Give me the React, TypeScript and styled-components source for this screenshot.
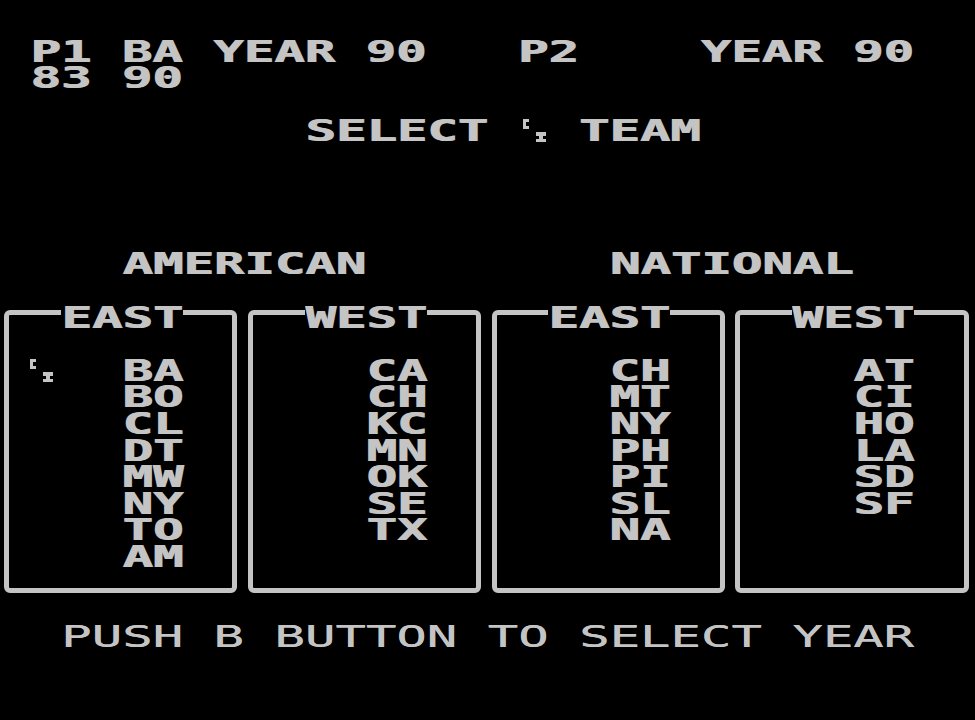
import React from "react";
import styled, { createGlobalStyle } from "styled-components";

const COL = 975 / 32;
const ROW = 26.6;
const FONT = 31;
const SCALE = COL / (FONT * 0.6021);
const INK = "#c4c4c4";

const Global = createGlobalStyle`
  html, body { margin: 0; padding: 0; background: #000; }
  #root { width: 975px; height: 720px; }
`;

const Screen = styled.div`
  width: 975px;
  height: 720px;
  box-sizing: border-box;
  overflow: hidden;
  background: #000;
  color: ${INK};
  font-family: "DejaVu Sans Mono", "Liberation Mono", monospace;
  font-size: ${FONT}px;
  font-weight: bold;
  padding-top: 37.6px;
  display: flex;
  flex-direction: column;
`;

const Line = styled.div<{ $col?: number; $gap?: number }>`
  display: flex;
  align-items: flex-start;
  height: ${ROW}px;
  line-height: ${ROW}px;
  padding-left: ${(p) => (p.$col ?? 0) * COL}px;
  margin-top: ${(p) => (p.$gap ?? 0) * ROW}px;
`;

const Cell = styled.span<{ $cols: number }>`
  display: inline-block;
  flex: none;
  width: ${(p) => p.$cols * COL}px;
  height: ${ROW}px;
  white-space: pre;
`;

const Glyphs = styled.span<{ $thin?: boolean }>`
  display: inline-block;
  white-space: pre;
  transform: scaleX(${SCALE});
  transform-origin: 0 0;
  font-weight: ${(p) => (p.$thin ? "normal" : "bold")};
  text-shadow: ${(p) => (p.$thin ? "0.3px 0 0 currentColor" : "0.9px 0 0 currentColor")};
`;

function Tiles({ text, thin }: { text: string; thin?: boolean }) {
  return (
    <Cell $cols={text.length}>
      <Glyphs $thin={thin}>{text}</Glyphs>
    </Cell>
  );
}

const PX_W = COL / 8;
const PX_H = ROW / 8;

const CursorSvg = styled.svg<{ $dx: number; $dy: number }>`
  display: block;
  flex: none;
  width: ${7 * PX_W}px;
  height: ${7 * PX_H}px;
  margin-left: ${(p) => p.$dx}px;
  margin-top: ${(p) => p.$dy}px;
`;

function Cursor({ dx, dy }: { dx: number; dy: number }) {
  return (
    <CursorSvg $dx={dx} $dy={dy} viewBox="0 0 7 7" shapeRendering="crispEdges">
      <g fill={INK}>
        <rect x="0" y="0" width="2" height="1" />
        <rect x="0" y="1" width="1" height="1" />
        <rect x="0" y="2" width="2" height="1" />
        <rect x="4" y="4" width="3" height="1" />
        <rect x="5" y="5" width="1" height="1" />
        <rect x="4" y="6" width="3" height="1" />
      </g>
    </CursorSvg>
  );
}

const CursorCell = styled.span`
  display: flex;
  flex: none;
  width: ${COL}px;
  height: ${ROW}px;
`;

const Divisions = styled.div`
  display: flex;
  height: ${11 * ROW}px;
  margin-top: ${ROW}px;
`;

const Division = styled.div`
  flex: none;
  width: ${8 * COL}px;
  display: flex;
  flex-direction: column;
`;

const FRAME_LEFT = 4;
const BORDER = 5;
const INSET = FRAME_LEFT + BORDER;

const Frame = styled.div`
  box-sizing: border-box;
  height: 283px;
  margin: 6px 6.5px 0 ${FRAME_LEFT}px;
  border: ${BORDER}px solid ${INK};
  border-radius: 6px;
  display: flex;
  flex-direction: column;
`;

const Legend = styled.div`
  align-self: flex-start;
  display: flex;
  height: ${ROW}px;
  line-height: ${ROW}px;
  margin-top: -${6 + BORDER}px;
  margin-left: ${2 * COL - INSET}px;
  background: #000;
`;

const TeamList = styled.div`
  display: flex;
  flex-direction: column;
  margin-top: ${ROW}px;
`;

const TeamRow = styled.div`
  display: grid;
  grid-template-columns: ${4 * COL - INSET}px auto;
  height: ${ROW}px;
  line-height: ${ROW}px;
`;

const Marker = styled.div`
  display: flex;
  align-items: flex-start;
`;

type Div = { name: string; teams: string[]; cursor?: boolean };

const divisions: Div[] = [
  { name: "EAST", teams: ["BA", "BO", "CL", "DT", "MW", "NY", "TO", "AM"], cursor: true },
  { name: "WEST", teams: ["CA", "CH", "KC", "MN", "OK", "SE", "TX"] },
  { name: "EAST", teams: ["CH", "MT", "NY", "PH", "PI", "SL", "NA"] },
  { name: "WEST", teams: ["AT", "CI", "HO", "LA", "SD", "SF"] },
];

export default function App() {
  return (
    <>
      <Global />
      <Screen>
        <Line $col={1}>
          <Tiles text="P1 BA YEAR 90   P2    YEAR 90" />
        </Line>
        <Line $col={1}>
          <Tiles text="83 90" />
        </Line>
        <Line $col={10} $gap={1}>
          <Tiles text="SELECT " />
          <CursorCell>
            <Cursor dx={3} dy={2} />
          </CursorCell>
          <Tiles text=" TEAM" />
        </Line>
        <Line $col={4} $gap={4}>
          <Tiles text="AMERICAN        NATIONAL" />
        </Line>
        <Divisions>
          {divisions.map((d, i) => (
            <Division key={i}>
              <Frame>
                <Legend>
                  <Tiles text={d.name} />
                </Legend>
                <TeamList>
                  {d.teams.map((t, j) => (
                    <TeamRow key={t}>
                      <Marker>{d.cursor && j === 0 ? <Cursor dx={19} dy={2} /> : null}</Marker>
                      <Tiles text={t} />
                    </TeamRow>
                  ))}
                </TeamList>
              </Frame>
            </Division>
          ))}
        </Divisions>
        <Line $col={2} $gap={1}>
          <Tiles text="PUSH B BUTTON TO SELECT YEAR" thin />
        </Line>
      </Screen>
    </>
  );
}
